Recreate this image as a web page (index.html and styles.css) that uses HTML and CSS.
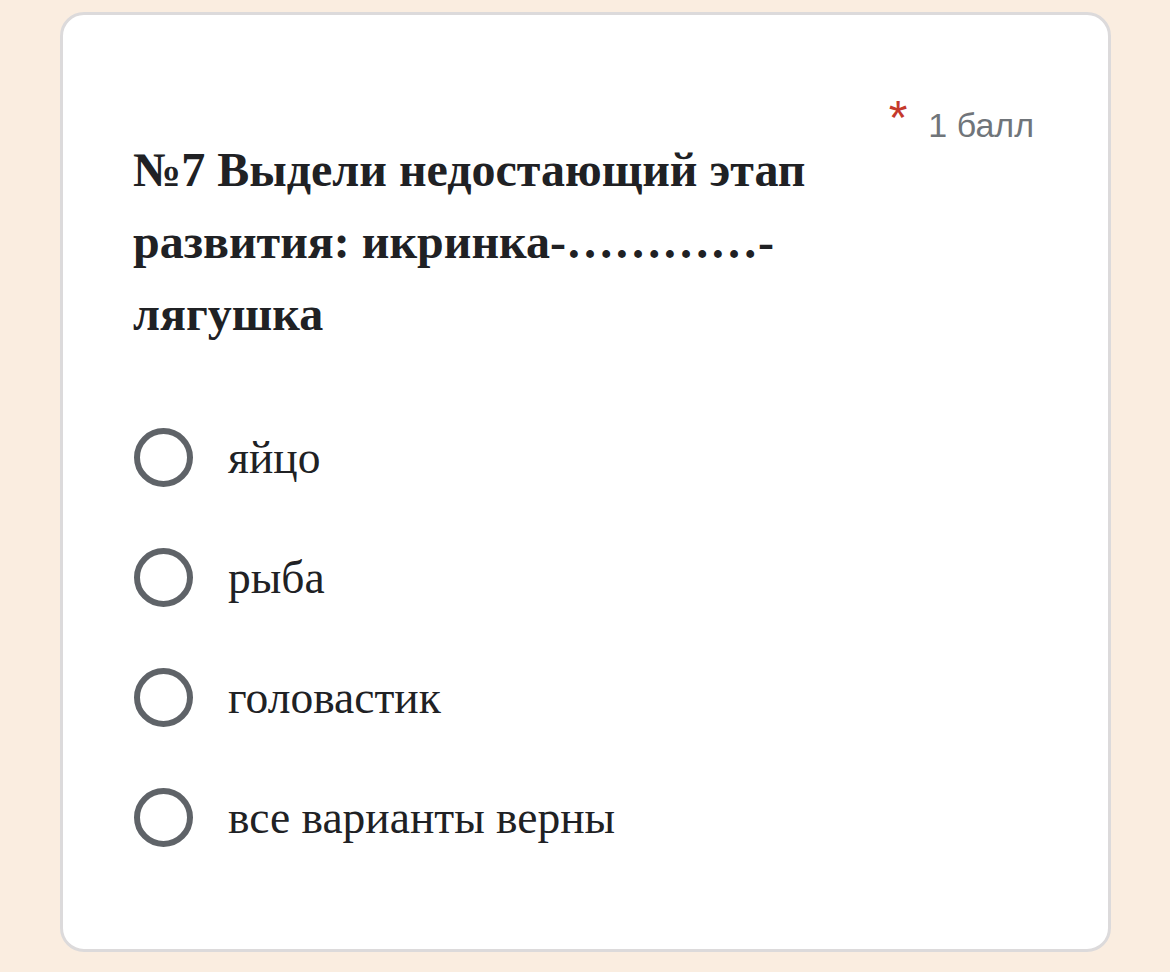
FILE: index.html
```html
<!DOCTYPE html>
<html lang="ru">
<head>
<meta charset="utf-8">
<link rel="stylesheet" href="styles.css">
</head>
<body>
<div class="card">
  <div class="head">
    <div class="title">№7 Выдели недостающий этап развития: икринка-…………-лягушка</div>
    <div class="points"><span class="req">*</span><span class="score">1 балл</span></div>
  </div>
  <div class="options">
    <label class="option"><span class="radio"></span><span class="label">яйцо</span></label>
    <label class="option"><span class="radio"></span><span class="label">рыба</span></label>
    <label class="option"><span class="radio"></span><span class="label">головастик</span></label>
    <label class="option"><span class="radio"></span><span class="label">все варианты верны</span></label>
  </div>
</div>
</body>
</html>
```
FILE: styles.css
```css
html, body {
  margin: 0;
  padding: 0;
  background: #faede0;
}
body {
  padding: 12px 59px 0 60px;
  height: 972px;
  box-sizing: border-box;
}
.card {
  background: #fff;
  border: 3px solid #dcdadb;
  border-radius: 24px;
  height: 940px;
  box-sizing: border-box;
  padding: 84px 74px 0 70px;
}
.head {
  display: flex;
  align-items: flex-start;
}
.title {
  flex: 1;
  font-family: "Liberation Serif", "Times New Roman", serif;
  font-weight: bold;
  font-size: 48px;
  line-height: 72px;
  color: #202124;
  margin-top: 35px;
}
.points {
  display: flex;
  align-items: flex-start;
  font-family: "Liberation Sans", Arial, sans-serif;
  font-size: 34px;
  color: #70757a;
  line-height: 40px;
  margin-top: 6px;
}
.req {
  color: #c5392c;
  font-size: 48px;
  line-height: 48px;
  margin-top: -11px;
  margin-right: 21px;
}
.options {
  margin-top: 47px;
  display: flex;
  flex-direction: column;
}
.option {
  display: flex;
  align-items: center;
  height: 120px;
}
.radio {
  width: 59px;
  height: 59px;
  box-sizing: border-box;
  border: 6px solid #5f6368;
  border-radius: 50%;
  margin-left: 1px;
  margin-right: 35px;
  flex: none;
}
.label {
  font-family: "Liberation Serif", "Times New Roman", serif;
  font-size: 45.5px;
  color: #202124;
}
```
